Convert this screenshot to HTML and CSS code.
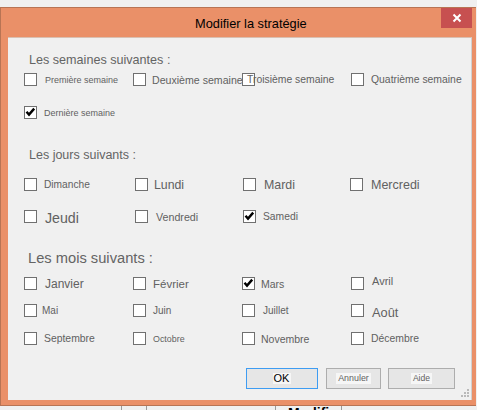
FILE: index.html
```html
<!DOCTYPE html>
<html lang="fr">
<head>
<meta charset="utf-8">
<title>Modifier la stratégie</title>
<link rel="stylesheet" href="styles.css">
</head>
<body>
<div class="window">
  <div class="titlebar">
    <span class="title">Modifier la stratégie</span>
    <span class="close"><svg width="31" height="20" viewBox="0 0 31 20"><path d="M12.5 6.5 L19.5 13.5 M19.5 6.5 L12.5 13.5" stroke="#fff" stroke-width="2"/></svg></span>
  </div>
  <div class="client">
    <div class="heading hs1">Les semaines suivantes :</div>
    <div class="row mt5">
      <div class="item"><span class="box"></span><span class="lbl fs9 g8">Première semaine</span></div>
      <div class="item"><span class="box"></span><span class="lbl fs106 g6">Deuxième semaine</span></div>
      <div class="item"><span class="box"></span><span class="lbl fs104 gn8">Troisième semaine</span></div>
      <div class="item"><span class="box"></span><span class="lbl fs104 g7">Quatrième semaine</span></div>
    </div>
    <div class="row mt20">
      <div class="item"><span class="box"><svg class="tick" width="11" height="11" viewBox="0 0 11 11"><path d="M1.5 4.8 L4 7.6 L9.2 1.6" fill="none" stroke="#000" stroke-width="2.4"/></svg></span><span class="lbl fs9 g7">Dernière semaine</span></div>
    </div>

    <div class="heading hs2">Les jours suivants :</div>
    <div class="row mt15">
      <div class="item"><span class="box"></span><span class="lbl fs102 g7">Dimanche</span></div>
      <div class="item dx2"><span class="box"></span><span class="lbl fs123 g6">Lundi</span></div>
      <div class="item dx1"><span class="box"></span><span class="lbl fs124 g8">Mardi</span></div>
      <div class="item dxm1"><span class="box"></span><span class="lbl fs125 g8">Mercredi</span></div>
    </div>
    <div class="row mt19">
      <div class="item"><span class="box"></span><span class="lbl fs142 g8 low2">Jeudi</span></div>
      <div class="item dx2"><span class="box"></span><span class="lbl fs107 g8">Vendredi</span></div>
      <div class="item dx1"><span class="box"><svg class="tick" width="11" height="11" viewBox="0 0 11 11"><path d="M1.5 4.8 L4 7.6 L9.2 1.6" fill="none" stroke="#000" stroke-width="2.4"/></svg></span><span class="lbl fs103 g7">Samedi</span></div>
    </div>

    <div class="heading hs3">Les mois suivants :</div>
    <div class="row mt10">
      <div class="item"><span class="box"></span><span class="lbl fs12 g8">Janvier</span></div>
      <div class="item"><span class="box"></span><span class="lbl fs115 g7">Février</span></div>
      <div class="item"><span class="box"><svg class="tick" width="11" height="11" viewBox="0 0 11 11"><path d="M1.5 4.8 L4 7.6 L9.2 1.6" fill="none" stroke="#000" stroke-width="2.4"/></svg></span><span class="lbl fs105 g6">Mars</span></div>
      <div class="item"><span class="box"></span><span class="lbl fs11 g8 up5">Avril</span></div>
    </div>
    <div class="row mt14">
      <div class="item"><span class="box"></span><span class="lbl fs10 g5">Mai</span></div>
      <div class="item"><span class="box"></span><span class="lbl fs10 g7">Juin</span></div>
      <div class="item"><span class="box"></span><span class="lbl fs10 g8">Juillet</span></div>
      <div class="item"><span class="box"></span><span class="lbl fs128 g8 low3">Août</span></div>
    </div>
    <div class="row mt15">
      <div class="item"><span class="box"></span><span class="lbl fs104 g7">Septembre</span></div>
      <div class="item"><span class="box"></span><span class="lbl fs89 g7">Octobre</span></div>
      <div class="item"><span class="box"></span><span class="lbl fs105 g6">Novembre</span></div>
      <div class="item"><span class="box"></span><span class="lbl fs104 g7">Décembre</span></div>
    </div>

    <div class="buttons">
      <span class="btn btn-ok"><span class="btn-text">OK</span></span>
      <span class="btn btn-cancel"><span class="btn-text">Annuler</span></span>
      <span class="btn btn-help"><span class="btn-text">Aide</span></span>
    </div>
    <svg class="grip" width="8" height="8" viewBox="0 0 8 8"><g fill="#b9b9b9"><rect x="6" y="0" width="2" height="2"/><rect x="3" y="3" width="2" height="2"/><rect x="6" y="3" width="2" height="2"/><rect x="0" y="6" width="2" height="2"/><rect x="3" y="6" width="2" height="2"/><rect x="6" y="6" width="2" height="2"/></g></svg>
  </div>
</div>
<div class="under">
  <span class="u1"></span>
  <span class="u2"><span class="u-text">Modifier</span></span>
</div>
</body>
</html>
```

FILE: styles.css
```css
html, body {
  margin: 0;
  padding: 0;
}
body {
  width: 477px;
  height: 410px;
  overflow: hidden;
  background: #f0f0f0;
  font-family: "Liberation Sans", Arial, sans-serif;
}
.window {
  margin-top: 7px;
  width: 476px;
  background: #ea9068;
  border-top: 1px solid #b87454;
  border-left: 1px solid #b87454;
  border-bottom: 1px solid #b87454;
  padding: 0 0 5px 7px;
  box-sizing: border-box;
  height: 399px;
  overflow: hidden;
}
.titlebar {
  height: 29px;
  display: flex;
  align-items: flex-start;
  margin-left: -7px;
}
.title {
  margin-left: 194px;
  font-size: 12.8px;
  line-height: 29px;
  color: #000;
  padding-top: 1px;
  white-space: nowrap;
}
.close {
  margin-left: auto;
  margin-right: 4px;
  width: 31px;
  height: 20px;
  background: #c75050;
  display: block;
}
.close svg {
  display: block;
}
.client {
  position: relative;
  width: 464px;
  height: 363px;
  box-sizing: border-box;
  background: #f0f0f0;
  border-top: 1px solid #d9c0b2;
  border-right: 1px solid #d0d0d0;
}
.heading {
  color: #646464;
  white-space: nowrap;
}
.hs1 {
  margin-top: 15px;
  padding-left: 21px;
  font-size: 12.6px;
  line-height: 15px;
}
.hs2 {
  margin-top: 29px;
  padding-left: 21px;
  font-size: 12.5px;
  line-height: 15px;
}
.hs3 {
  margin-top: 27px;
  padding-left: 20px;
  font-size: 14.7px;
  line-height: 17px;
}
.row {
  display: grid;
  grid-template-columns: 109px 109px 109px 109px;
  padding-left: 16px;
  height: 13px;
  align-items: center;
}
.mt5 { margin-top: 5px; }
.mt10 { margin-top: 10px; }
.mt14 { margin-top: 14px; }
.mt15 { margin-top: 15px; }
.mt19 { margin-top: 19px; }
.mt20 { margin-top: 20px; }
.item {
  display: flex;
  align-items: center;
  height: 13px;
  white-space: nowrap;
}
.dx1 { margin-left: 1px; }
.dx2 { margin-left: 2px; }
.dxm1 { margin-left: -1px; }
.box {
  flex: none;
  width: 13px;
  height: 13px;
  box-sizing: border-box;
  border: 1px solid #707070;
  background: #fff;
  display: block;
}
.tick {
  display: block;
}
.lbl {
  color: #616161;
  line-height: normal;
}
.g5 { margin-left: 5px; }
.g6 { margin-left: 6px; }
.g7 { margin-left: 7px; }
.g8 { margin-left: 8px; }
.gn8 { margin-left: -8px; }
.up5 { margin-bottom: 5px; }
.low2 { margin-top: 2px; }
.low3 { margin-top: 3px; }
.fs89 { font-size: 8.9px; }
.fs9 { font-size: 9px; }
.fs10 { font-size: 10px; }
.fs102 { font-size: 10.2px; }
.fs103 { font-size: 10.3px; }
.fs104 { font-size: 10.4px; }
.fs105 { font-size: 10.5px; }
.fs106 { font-size: 10.6px; }
.fs107 { font-size: 10.7px; }
.fs11 { font-size: 11px; }
.fs115 { font-size: 11.5px; }
.fs12 { font-size: 12px; }
.fs123 { font-size: 12.3px; }
.fs124 { font-size: 12.4px; }
.fs125 { font-size: 12.5px; }
.fs128 { font-size: 12.8px; }
.fs142 { font-size: 14.2px; }
.buttons {
  margin-top: 23px;
  display: flex;
  padding-left: 238px;
}
.btn {
  height: 21px;
  box-sizing: border-box;
  display: flex;
  align-items: center;
  justify-content: center;
  background: #e6e6e6;
  border: 1px solid #adadad;
}
.btn-text {
  background: #f6f6f6;
  padding: 0 2px;
  line-height: 11px;
}
.btn-ok {
  width: 72px;
  border-color: #3e9cf2;
  font-size: 11px;
  color: #000;
}
.btn-ok .btn-text {
  padding-left: 1px;
}
.btn-cancel {
  width: 55px;
  margin-left: 8px;
  font-size: 8.9px;
  color: #616161;
}
.btn-help {
  width: 67px;
  margin-left: 7px;
  font-size: 8.6px;
  color: #616161;
}
.grip {
  position: absolute;
  right: 2px;
  bottom: 3px;
}
.under {
  height: 4px;
  display: flex;
  overflow: hidden;
}
.u1 {
  margin-left: 121px;
  width: 24px;
  border-left: 1px solid #9a9a9a;
  border-right: 1px solid #9a9a9a;
}
.u2 {
  margin-left: 128px;
  width: 65px;
  border-left: 1px solid #9a9a9a;
  border-right: 1px solid #9a9a9a;
  overflow: hidden;
}
.u-text {
  display: block;
  margin-left: 12px;
  font-size: 14px;
  font-weight: bold;
  line-height: 14px;
  color: #000;
}
```
